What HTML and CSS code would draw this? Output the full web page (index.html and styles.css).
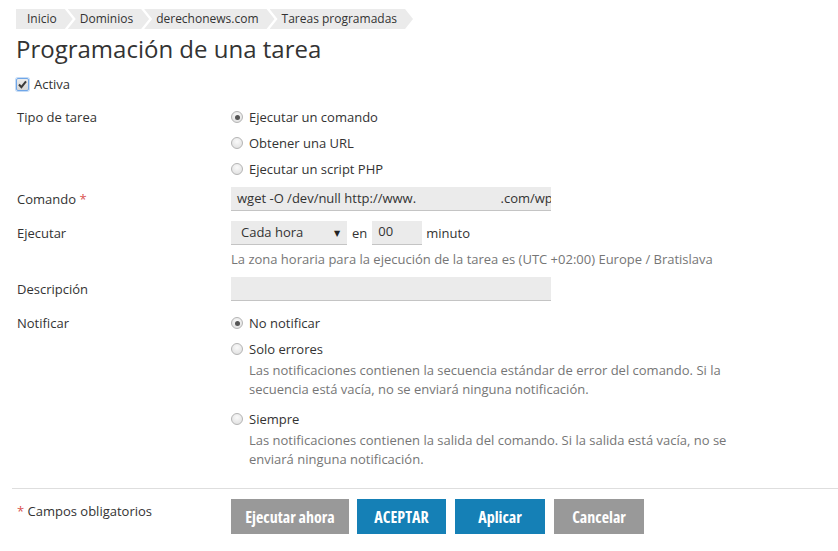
FILE: index.html
```html
<!DOCTYPE html>
<html lang="es">
<head>
<meta charset="utf-8">
<title>Programación de una tarea</title>
<link rel="stylesheet" href="styles.css">
</head>
<body>
<div class="page">
  <nav class="crumbs">
    <span class="crumb first">Inicio</span>
    <span class="crumb">Dominios</span>
    <span class="crumb">derechonews.com</span>
    <span class="crumb">Tareas programadas</span>
  </nav>
  <h1 class="title">Programación de una tarea</h1>
  <label class="check-row">
    <span class="checkbox"><svg viewBox="0 0 13 13" width="13" height="13"><path d="M3 6.5 L5.4 9.2 L10 3.4" fill="none" stroke="#3a3a3a" stroke-width="2"/></svg></span>
    <span>Activa</span>
  </label>

  <div class="row row-tipo">
    <div class="label">Tipo de tarea</div>
    <div class="field options">
      <div class="radio-line"><span class="radio on"></span>Ejecutar un comando</div>
      <div class="radio-line"><span class="radio"></span>Obtener una URL</div>
      <div class="radio-line"><span class="radio"></span>Ejecutar un script PHP</div>
    </div>
  </div>

  <div class="row row-cmd center">
    <div class="label">Comando <span class="req">*</span></div>
    <div class="field"><div class="input wide">wget -O /dev/null http://www.                         .com/wp-cron.php</div></div>
  </div>

  <div class="row row-exec">
    <div class="label lbl-exec">Ejecutar</div>
    <div class="field">
      <div class="inline">
        <div class="select">Cada hora<span class="arrow">▼</span></div>
        <span class="word w-en">en</span>
        <div class="input small">00</div>
        <span class="word w-min">minuto</span>
      </div>
      <div class="hint tz">La zona horaria para la ejecución de la tarea es (UTC +02:00) Europe / Bratislava</div>
    </div>
  </div>

  <div class="row row-desc center">
    <div class="label">Descripción</div>
    <div class="field"><div class="input wide"></div></div>
  </div>

  <div class="row row-notif">
    <div class="label">Notificar</div>
    <div class="field options">
      <div class="radio-line"><span class="radio on"></span>No notificar</div>
      <div class="radio-line"><span class="radio"></span>Solo errores</div>
      <div class="hint sub">Las notificaciones contienen la secuencia estándar de error del comando. Si la secuencia está vacía, no se enviará ninguna notificación.</div>
      <div class="radio-line siempre"><span class="radio"></span>Siempre</div>
      <div class="hint sub last">Las notificaciones contienen la salida del comando. Si la salida está vacía, no se enviará ninguna notificación.</div>
    </div>
  </div>

  <hr class="divider">

  <div class="row footer">
    <div class="label req-note"><span class="req">*</span> Campos obligatorios</div>
    <div class="field buttons">
      <button class="btn gray b1">Ejecutar ahora</button>
      <button class="btn blue b2">ACEPTAR</button>
      <button class="btn blue b3">Aplicar</button>
      <button class="btn gray b4">Cancelar</button>
    </div>
  </div>
</div>
</body>
</html>
```
FILE: styles.css
```css
html, body {
  margin: 0;
  padding: 0;
  background: #fff;
}
body {
  font-family: "Open Sans", "DejaVu Sans", sans-serif;
  font-size: 13px;
  line-height: 18px;
  color: #333;
}
.page {
  padding: 9px 0 0 16px;
}

/* breadcrumbs */
.crumbs {
  display: flex;
  height: 20px;
}
.crumb {
  display: block;
  height: 20px;
  line-height: 20px;
  font-size: 12px;
  background: #ebebeb;
  color: #333;
  padding: 0 16px 0 12px;
  margin-left: -5px;
  clip-path: polygon(0 0, calc(100% - 8px) 0, 100% 50%, calc(100% - 8px) 100%, 0 100%, 8px 50%);
}
.crumb.first {
  margin-left: 0;
  padding-left: 11px;
  clip-path: polygon(0 0, calc(100% - 8px) 0, 100% 50%, calc(100% - 8px) 100%, 0 100%);
}

/* title */
.title {
  margin: 4px 0 0 0;
  font-size: 24px;
  line-height: 32px;
  font-weight: 400;
  color: #333;
}

/* checkbox */
.check-row {
  display: flex;
  align-items: center;
  gap: 5px;
  margin-top: 10px;
  height: 18px;
}
.checkbox {
  display: block;
  width: 13px;
  height: 13px;
  box-sizing: border-box;
  border: 1px solid #6fa6e8;
  border-radius: 2px;
  background: linear-gradient(#ececec, #d6d6d6);
  box-shadow: 0 0 0 1px #c6dcf6;
}
.checkbox svg { display: block; margin: -1px 0 0 -1px; }

/* form rows */
.row {
  display: grid;
  grid-template-columns: 214px 1fr;
  padding-left: 1px;
}
.row.center { align-items: center; }
.label { color: #333; }
.req { color: #d9534f; }

.row-tipo { margin-top: 15px; }
.options { display: flex; flex-direction: column; }
.radio-line {
  display: flex;
  align-items: center;
  gap: 6px;
  height: 18px;
}
.options .radio-line + .radio-line { margin-top: 8px; }
.radio {
  display: block;
  width: 12px;
  height: 12px;
  box-sizing: border-box;
  border: 1px solid #b4b4b4;
  border-radius: 50%;
  background: radial-gradient(circle at 50% 35%, #fafafa, #dcdcdc);
  position: relative;
}
.radio.on::after {
  content: "";
  position: absolute;
  left: 2.5px;
  top: 2.5px;
  width: 5px;
  height: 5px;
  border-radius: 50%;
  background: #555;
}

.input {
  height: 24px;
  line-height: 23px;
  box-sizing: border-box;
  background: #ebebeb;
  border-bottom: 1px solid #c4c4c4;
  padding: 0 6px;
  color: #333;
  white-space: pre;
  overflow: hidden;
}
.input.wide { width: 320px; }
.input.small { width: 50px; padding: 0 6px; line-height: 21px; }

.row-cmd { margin-top: 9px; }
.row-exec { margin-top: 10px; }
.lbl-exec { line-height: 24px; }
.inline {
  display: flex;
  align-items: center;
  height: 24px;
}
.select {
  width: 116px;
  height: 24px;
  line-height: 23px;
  box-sizing: border-box;
  background: #ebebeb;
  border-bottom: 1px solid #c4c4c4;
  padding: 0 0 0 10px;
  display: flex;
  justify-content: space-between;
}
.arrow {
  font-size: 8px;
  width: 13px;
  color: #222;
}
.w-en { margin: 0 5px 0 5px; }
.w-min { margin-left: 4px; }

.hint { color: #767676; }
.tz { margin-top: 5px; }

.row-desc { margin-top: 9px; }
.row-notif { margin-top: 13px; }
.hint.sub {
  margin-top: 3px;
  line-height: 18.5px;
  max-width: 510px;
  padding-left: 18px;
}
.options .radio-line.siempre { margin-top: 12px; }
.hint.sub.last { margin-top: 3px; }

.divider {
  border: 0;
  border-top: 1px solid #dedede;
  margin: 20px 0 0 -4px;
}

.footer {
  margin-top: 10px;
  align-items: start;
}
.req-note { margin-top: 3px; }
.buttons {
  display: flex;
}
.btn {
  height: 35px;
  border: 0;
  color: #fff;
  font-family: "Open Sans", sans-serif;
  font-weight: 700;
  font-size: 16px;
  font-stretch: 75%;
  padding: 0;
  cursor: pointer;
}
.btn.gray { background: #999; }
.btn.blue { background: #1580b6; }
.b1 { width: 118px; }
.b2 { width: 89px; margin-left: 8px; }
.b3 { width: 90px; margin-left: 9px; }
.b4 { width: 90px; margin-left: 9px; }
```
